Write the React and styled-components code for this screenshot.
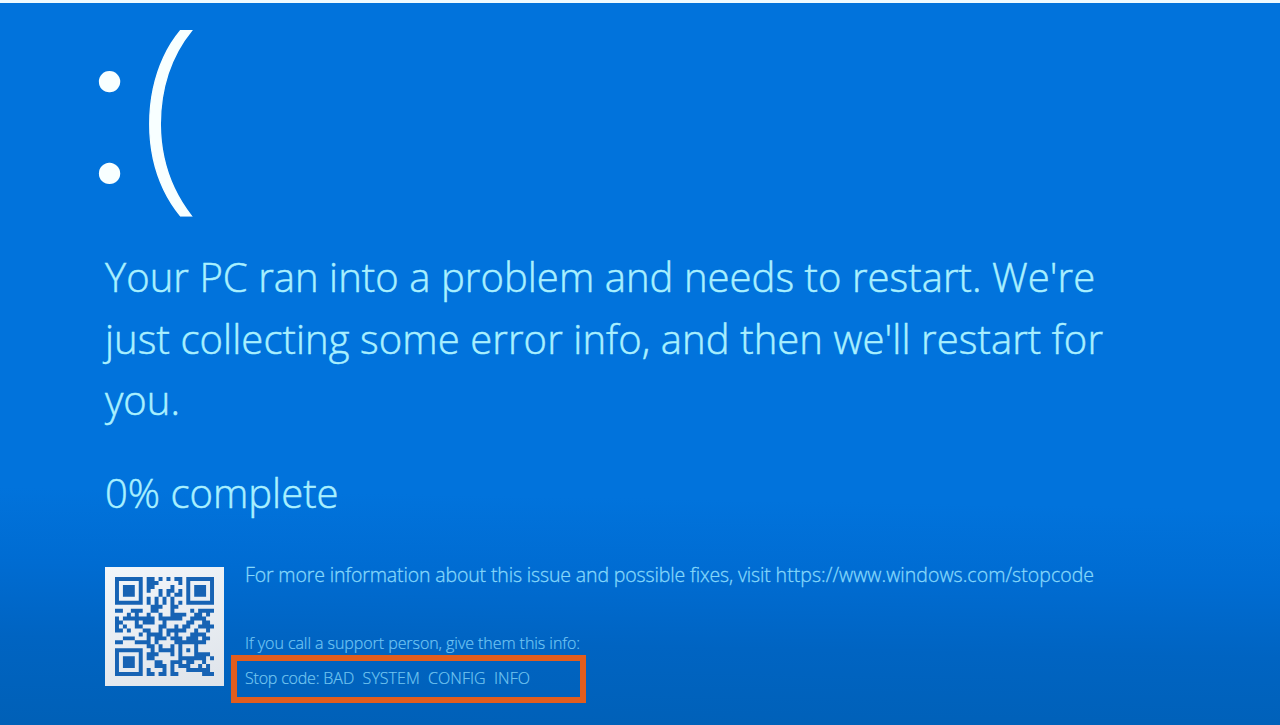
import React from 'react';
import styled, { createGlobalStyle } from 'styled-components';

const GlobalStyle = createGlobalStyle`
  * {
    box-sizing: border-box;
  }
  body {
    margin: 0;
    background: #0173dc;
    overflow: hidden;
  }
`;

const Screen = styled.main`
  display: flex;
  flex-direction: column;
  height: 725px;
  padding-left: 105px;
  border-top: 3px solid #eefaff;
  background: linear-gradient(
    181deg,
    #0173dc 0%,
    #0173dc 68%,
    #006cd2 78%,
    #0064c2 88%,
    #0060b7 100%
  );
  color: #a9f0ff;
  font-family: 'Open Sans', 'Noto Sans', sans-serif;
  font-weight: 300;
`;

const Face = styled.div`
  display: flex;
  align-items: flex-start;
  height: 243px;
  color: #f8ffff;
  white-space: nowrap;
`;

const Eyes = styled.span`
  width: 59px;
  margin-left: -23px;
  font-family: Lato, sans-serif;
  font-size: 230px;
  line-height: 180px;
`;

const Mouth = styled.span`
  font-size: 212px;
  line-height: 193px;
  -webkit-text-stroke: 1.2px #f8ffff;
`;

const Message = styled.h1`
  display: flex;
  flex-direction: column;
  margin: 0;
  font-size: 40px;
  font-weight: 300;
  line-height: 61.5px;
  -webkit-text-stroke: 0.5px #a9f0ff;
`;

const Line = styled.span`
  white-space: pre;
  letter-spacing: ${(props) => props.$spacing || 0}px;
`;

const Progress = styled.p`
  margin: 31px 0 0;
  font-size: 40px;
  line-height: 61.5px;
  -webkit-text-stroke: 0.5px #a9f0ff;
`;

const Details = styled.section`
  display: flex;
  margin-top: 44px;
`;

const QrFrame = styled.div`
  flex: none;
  width: 119px;
  height: 119px;
  padding: 10px;
  background: linear-gradient(160deg, #f2f6fa, #dfe4ea);
  svg {
    display: block;
  }
`;

const Info = styled.div`
  display: flex;
  flex-direction: column;
  align-items: flex-start;
  margin-left: 7px;
`;

const MoreInfo = styled.p`
  margin: -6px 0 0 14px;
  color: #86d8fb;
  font-size: 19.5px;
  line-height: 28px;
  white-space: pre;
  -webkit-text-stroke: 0.3px #86d8fb;
`;

const Support = styled.p`
  margin: 43px 0 0 14px;
  color: #71c4f2;
  font-size: 16px;
  line-height: 22px;
  white-space: pre;
  -webkit-text-stroke: 0.2px #71c4f2;
`;

const StopCode = styled.p`
  width: 355px;
  height: 48px;
  margin: 1px 0 0;
  padding-left: 8px;
  border: 6px solid #e15d1e;
  color: #74c6f0;
  font-size: 16px;
  line-height: 34px;
  white-space: pre;
  -webkit-text-stroke: 0.2px #74c6f0;
`;

const QR_SIZE = 25;

// Reed-Solomon remainder over GF(256)
function gfMul(a, b) {
  let result = 0;
  for (let i = 7; i >= 0; i--) {
    result = (result << 1) ^ ((result >> 7) * 0x11d);
    result ^= ((b >> i) & 1) * a;
  }
  return result;
}

function errorCodewords(data, degree) {
  const divisor = new Array(degree).fill(0);
  divisor[degree - 1] = 1;
  let root = 1;
  for (let i = 0; i < degree; i++) {
    for (let j = 0; j < degree; j++) {
      divisor[j] = gfMul(divisor[j], root);
      if (j + 1 < degree) divisor[j] ^= divisor[j + 1];
    }
    root = gfMul(root, 2);
  }
  const rest = new Array(degree).fill(0);
  data.forEach((byte) => {
    const factor = byte ^ rest.shift();
    rest.push(0);
    divisor.forEach((d, i) => {
      rest[i] ^= gfMul(d, factor);
    });
  });
  return rest;
}

// Version 2-L code, byte mode, mask 4
function buildQr(text) {
  const grid = Array.from({ length: QR_SIZE }, () => new Array(QR_SIZE).fill(null));

  const square = (cx, cy, radius, lightRings) => {
    for (let y = -radius; y <= radius; y++) {
      for (let x = -radius; x <= radius; x++) {
        const row = grid[cy + y];
        if (row && row[cx + x] !== undefined) {
          row[cx + x] = !lightRings.includes(Math.max(Math.abs(x), Math.abs(y)));
        }
      }
    }
  };
  square(3, 3, 4, [2, 4]);
  square(21, 3, 4, [2, 4]);
  square(3, 21, 4, [2, 4]);
  square(18, 18, 2, [1]);
  for (let i = 8; i < 17; i++) {
    grid[6][i] = i % 2 === 0;
    grid[i][6] = i % 2 === 0;
  }

  const format = [...'110011000101111'].map((bit) => bit === '1');
  const firstCopy = [
    [8, 0], [8, 1], [8, 2], [8, 3], [8, 4], [8, 5], [8, 7], [8, 8],
    [7, 8], [5, 8], [4, 8], [3, 8], [2, 8], [1, 8], [0, 8],
  ];
  firstCopy.forEach(([y, x], i) => {
    grid[y][x] = format[i];
  });
  format.forEach((bit, i) => {
    if (i < 7) grid[24 - i][8] = bit;
    else grid[8][10 + i] = bit;
  });
  grid[17][8] = true;

  const bytes = [...text].map((c) => c.charCodeAt(0));
  let bits = '0100' + bytes.length.toString(2).padStart(8, '0');
  bytes.forEach((b) => {
    bits += b.toString(2).padStart(8, '0');
  });
  bits += '0000';
  const data = bits.match(/.{8}/g).map((b) => parseInt(b, 2));
  for (let pad = 0xec; data.length < 34; pad ^= 0xec ^ 0x11) data.push(pad);
  const stream = [...data, ...errorCodewords(data, 10)];

  let n = 0;
  for (let right = 24; right >= 1; right -= 2) {
    if (right === 6) right = 5;
    for (let v = 0; v < QR_SIZE; v++) {
      for (let j = 0; j < 2; j++) {
        const x = right - j;
        const y = ((right + 1) & 2) === 0 ? QR_SIZE - 1 - v : v;
        if (grid[y][x] !== null) continue;
        const bit = n < stream.length * 8 ? (stream[n >> 3] >> (7 - (n & 7))) & 1 : 0;
        const mask = (Math.floor(y / 2) + Math.floor(x / 3)) % 2 === 0;
        grid[y][x] = Boolean(bit) !== mask;
        n++;
      }
    }
  }
  return grid;
}

function QrCode({ value }) {
  let path = '';
  buildQr(value).forEach((row, y) => {
    row.forEach((dark, x) => {
      if (dark) path += `M${x} ${y}h1v1h-1z`;
    });
  });
  return (
    <svg width="99" height="99" viewBox={`0 0 ${QR_SIZE} ${QR_SIZE}`}>
      <path d={path} fill="#1763b4" />
    </svg>
  );
}

function App() {
  return (
    <>
      <GlobalStyle />
      <Screen>
        <Face>
          <Eyes>:</Eyes>
          <Mouth>(</Mouth>
        </Face>
        <Message>
          <Line $spacing={0.05}>Your PC ran into a problem and needs to restart. We're</Line>
          <Line $spacing={0.08}>just collecting some error info, and then we'll restart for</Line>
          <Line>you.</Line>
        </Message>
        <Progress>0% complete</Progress>
        <Details>
          <QrFrame>
            <QrCode value="https://www.windows.com/stopcode" />
          </QrFrame>
          <Info>
            <MoreInfo>
              <Line $spacing={-0.14}>For more information about this issue and possible fixes, visit </Line>
              <Line $spacing={0.04}>https://www.windows.com/stopcode</Line>
            </MoreInfo>
            <Support>
              <Line $spacing={-0.06}>If you call a support person, give them this info:</Line>
            </Support>
            <StopCode>
              <Line $spacing={-0.2}>Stop code: </Line>
              <Line $spacing={0.03}>BAD  SYSTEM  CONFIG  INFO</Line>
            </StopCode>
          </Info>
        </Details>
      </Screen>
    </>
  );
}

export default App;
